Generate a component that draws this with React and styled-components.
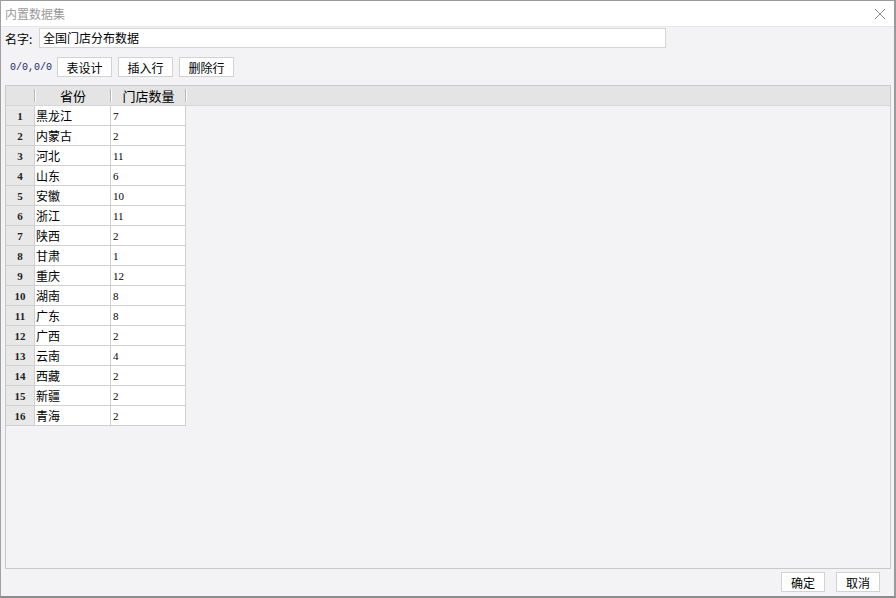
import React from "react";
import styled, { createGlobalStyle } from "styled-components";

const rows = [
  ["黑龙江", 7],
  ["内蒙古", 2],
  ["河北", 11],
  ["山东", 6],
  ["安徽", 10],
  ["浙江", 11],
  ["陕西", 2],
  ["甘肃", 1],
  ["重庆", 12],
  ["湖南", 8],
  ["广东", 8],
  ["广西", 2],
  ["云南", 4],
  ["西藏", 2],
  ["新疆", 2],
  ["青海", 2],
];

const GlobalStyle = createGlobalStyle`
  html, body {
    margin: 0;
    padding: 0;
    background: #f3f3f5;
  }
  body {
    font-family: "Noto Sans CJK SC", "Noto Sans", sans-serif;
    font-size: 12px;
    color: #000;
  }
`;

const Window = styled.div`
  width: 896px;
  height: 598px;
  box-sizing: border-box;
  display: flex;
  flex-direction: column;
  background: #f3f3f5;
  border-top: 1px solid #9a9a9a;
  border-left: 1px solid #a0a0a0;
  border-right: 2px solid #9a9a9a;
  border-bottom: 2px solid #8c8c8c;
`;

const TitleBar = styled.div`
  height: 25px;
  flex: none;
  display: flex;
  align-items: center;
  justify-content: space-between;
  background: #fff;
  border-bottom: 1px solid #e6e6e6;
  padding: 0 8px 0 4px;
`;

const Title = styled.span`
  color: #9a9a9a;
  font-size: 12px;
`;

const Close = styled.svg`
  width: 12px;
  height: 12px;
`;

const Body = styled.div`
  flex: 1;
  display: flex;
  flex-direction: column;
  padding: 1px 3px 0 4px;
  min-height: 0;
`;

const NameRow = styled.div`
  display: flex;
  align-items: center;
  height: 20px;
`;

const Label = styled.span`
  width: 34px;
  font-size: 12px;
`;

const NameInput = styled.div`
  width: 627px;
  height: 20px;
  box-sizing: border-box;
  background: #fff;
  border: 1px solid #d4d4d4;
  padding: 0 3px;
  line-height: 18px;
  font-size: 12px;
`;

const Toolbar = styled.div`
  display: flex;
  align-items: center;
  gap: 6px;
  height: 20px;
  margin-top: 9px;
`;

const Counter = styled.span`
  font-family: "Liberation Mono", "DejaVu Sans Mono", monospace;
  font-size: 10px;
  color: #1c2a6a;
  margin-left: 5px;
  margin-right: -1px;
`;

const Button = styled.div`
  width: ${(p) => p.$w || 55}px;
  height: 20px;
  box-sizing: border-box;
  background: #fff;
  border: 1px solid #d2d2d2;
  display: flex;
  align-items: center;
  justify-content: center;
  font-size: 12px;
`;

const Panel = styled.div`
  margin-top: 8px;
  width: 886px;
  height: 484px;
  box-sizing: border-box;
  border: 1px solid #c8c8c8;
  display: flex;
  flex-direction: column;
`;

const HeaderRow = styled.div`
  display: flex;
  height: 20px;
  box-sizing: border-box;
  background: #e4e4e4;
  border-bottom: 1px solid #d6d6d6;
`;

const HeadCell = styled.div`
  position: relative;
  width: ${(p) => p.$w}px;
  box-sizing: border-box;
  display: flex;
  align-items: center;
  justify-content: center;
  font-size: 13px;

  &::after {
    content: "";
    position: absolute;
    right: 0;
    top: 3px;
    bottom: 3px;
    width: 1px;
    background: #b8b8b8;
    box-shadow: 1px 0 0 #fafafa;
  }
`;

const Row = styled.div`
  display: flex;
  height: 20px;
`;

const NumCell = styled.div`
  width: 29px;
  box-sizing: border-box;
  background: #e8e8e8;
  border-right: 1px solid #d0d0d0;
  border-bottom: 1px solid #d0d0d0;
  display: flex;
  align-items: center;
  justify-content: center;
  font-family: "Liberation Serif", "Times New Roman", serif;
  font-weight: bold;
  font-size: 11px;
  color: #222;
`;

const Cell = styled.div`
  width: ${(p) => p.$w}px;
  box-sizing: border-box;
  background: #fff;
  border-right: 1px solid #d0d0d0;
  border-bottom: 1px solid #d0d0d0;
  display: flex;
  align-items: center;
  padding-left: ${(p) => (p.$num ? 2 : 1)}px;
  font-family: ${(p) =>
    p.$num
      ? `"Liberation Serif", "Times New Roman", serif`
      : `"Noto Sans CJK SC", sans-serif`};
  font-size: ${(p) => (p.$num ? 11 : 12)}px;
`;

const Footer = styled.div`
  display: flex;
  justify-content: flex-end;
  gap: 11px;
  margin-top: 3px;
  padding-right: 11px;
`;

export default function App() {
  return (
    <>
      <GlobalStyle />
      <Window>
        <TitleBar>
          <Title>内置数据集</Title>
          <Close viewBox="0 0 12 12">
            <path d="M1 1 L11 11 M11 1 L1 11" stroke="#8a8a8a" strokeWidth="1" fill="none" />
          </Close>
        </TitleBar>
        <Body>
          <NameRow>
            <Label>名字:</Label>
            <NameInput>全国门店分布数据</NameInput>
          </NameRow>
          <Toolbar>
            <Counter>0/0,0/0</Counter>
            <Button>表设计</Button>
            <Button>插入行</Button>
            <Button>删除行</Button>
          </Toolbar>
          <Panel>
            <HeaderRow>
              <HeadCell $w={29} />
              <HeadCell $w={76}>省份</HeadCell>
              <HeadCell $w={75}>门店数量</HeadCell>
            </HeaderRow>
            {rows.map(([name, count], i) => (
              <Row key={name}>
                <NumCell>{i + 1}</NumCell>
                <Cell $w={76}>{name}</Cell>
                <Cell $w={75} $num>
                  {count}
                </Cell>
              </Row>
            ))}
          </Panel>
          <Footer>
            <Button $w={44}>确定</Button>
            <Button $w={44}>取消</Button>
          </Footer>
        </Body>
      </Window>
    </>
  );
}
